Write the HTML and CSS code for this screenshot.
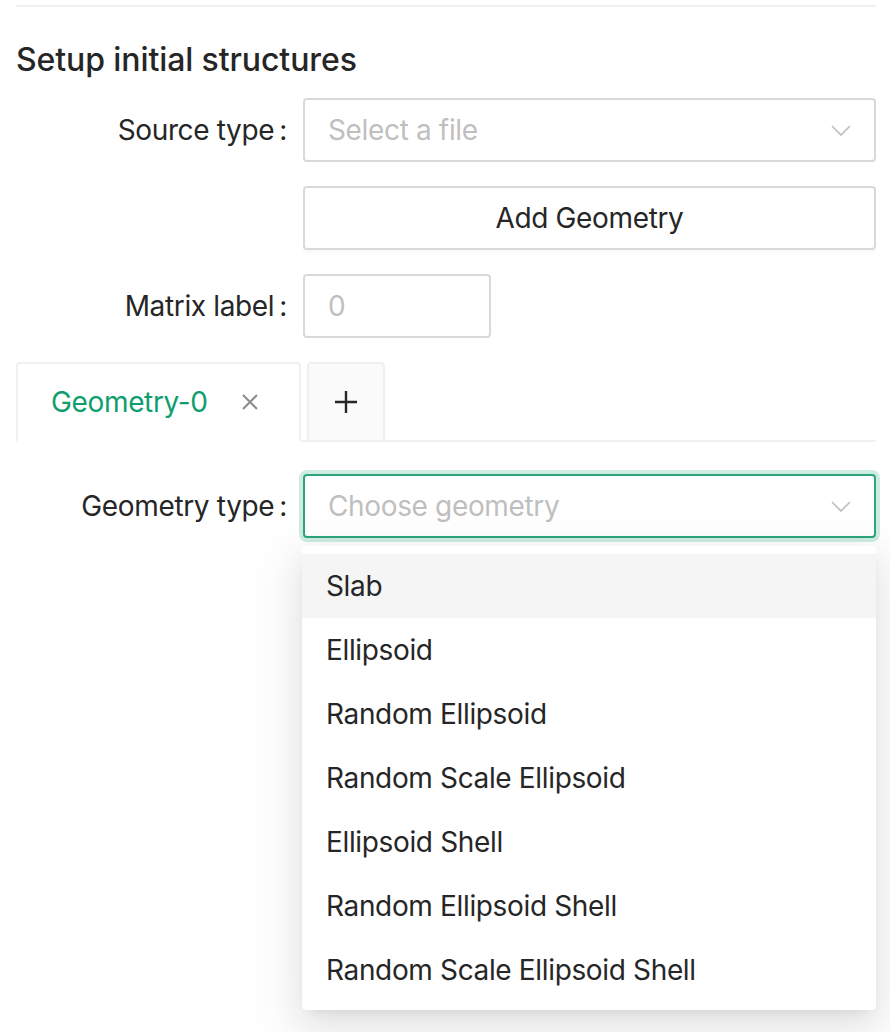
FILE: index.html
```html
<!DOCTYPE html>
<html>
<head>
<meta charset="utf-8">
<link rel="stylesheet" href="styles.css">
</head>
<body>
<div class="page">
  <div class="divider"></div>
  <h2 class="title">Setup initial structures</h2>
  <div class="form">
    <div class="label"><span>Source type</span></div>
    <div class="control">
      <div class="select">
        <span class="placeholder">Select a file</span>
        <svg class="arrow" width="20" height="11" viewBox="0 0 20 11"><path d="M1 1 L10 10 L19 1" fill="none" stroke="#bfbfbf" stroke-width="1.7"/></svg>
      </div>
    </div>
    <div></div>
    <div class="control">
      <button class="btn">Add Geometry</button>
    </div>
    <div class="label"><span>Matrix label</span></div>
    <div class="control">
      <div class="input-number"><span class="placeholder">0</span></div>
    </div>
  </div>

  <div class="tabs">
    <div class="tab active">
      <span class="tab-text">Geometry-0</span>
      <svg class="tab-close" width="18" height="18" viewBox="0 0 18 18"><path d="M2 2 L16 16 M16 2 L2 16" stroke="#8c8c8c" stroke-width="2"/></svg>
    </div>
    <div class="tab add">
      <svg width="22" height="22" viewBox="0 0 22 22"><path d="M11 0 V22 M0 11 H22" stroke="#262626" stroke-width="2.4"/></svg>
    </div>
  </div>

  <div class="form geo">
    <div class="label"><span>Geometry type</span></div>
    <div class="control">
      <div class="select-wrap">
        <div class="select focused">
          <span class="placeholder">Choose geometry</span>
          <svg class="arrow" width="20" height="11" viewBox="0 0 20 11"><path d="M1 1 L10 10 L19 1" fill="none" stroke="#bfbfbf" stroke-width="1.7"/></svg>
        </div>
        <div class="dropdown">
          <div class="option active">Slab</div>
          <div class="option">Ellipsoid</div>
          <div class="option">Random Ellipsoid</div>
          <div class="option">Random Scale Ellipsoid</div>
          <div class="option">Ellipsoid Shell</div>
          <div class="option">Random Ellipsoid Shell</div>
          <div class="option">Random Scale Ellipsoid Shell</div>
        </div>
      </div>
    </div>
  </div>
</div>
</body>
</html>
```
FILE: styles.css
```css
* { box-sizing: border-box; }
html, body { margin: 0; padding: 0; background: #fff; }
body {
  font-family: Inter, "Noto Sans", "Liberation Sans", sans-serif;
  color: #262626;
  font-size: 28px;
  letter-spacing: -0.35px;
}
.page {
  padding: 5px 14px 0 16px;
  height: 1032px;
  overflow: hidden;
}
.divider {
  height: 2px;
  background: #f0f0f0;
}
.title {
  margin: 29px 0 14px;
  font-size: 32px;
  line-height: 48px;
  font-weight: 500;
  letter-spacing: -0.1px;
  color: #262626;
}
.form {
  display: grid;
  grid-template-columns: 271px 1fr;
  column-gap: 16px;
  row-gap: 24px;
}
.label {
  display: flex;
  align-items: center;
  justify-content: flex-end;
  height: 64px;
  line-height: 42px;
  color: #262626;
}
.label span::after {
  content: ":";
  margin-left: 5px;
}
.control {
  display: flex;
  align-items: center;
  min-height: 64px;
}
.select {
  width: 100%;
  height: 64px;
  border: 2px solid #d9d9d9;
  border-radius: 4px;
  display: flex;
  align-items: center;
  justify-content: space-between;
  padding: 0 23px 0 23px;
  background: #fff;
}
.select.focused {
  border-color: #2ea57c;
  box-shadow: 0 0 0 4px rgba(14, 158, 110, 0.2);
}
.placeholder {
  color: #bfbfbf;
  line-height: 42px;
}
.arrow { flex: none; }
.btn {
  width: 100%;
  height: 64px;
  border: 2px solid #d9d9d9;
  border-radius: 4px;
  background: #fff;
  font: inherit;
  letter-spacing: inherit;
  color: #262626;
  box-shadow: 0 4px 0 rgba(0, 0, 0, 0.015);
  padding: 0 30px;
}
.input-number {
  width: 188px;
  height: 64px;
  border: 2px solid #d9d9d9;
  border-radius: 4px;
  display: flex;
  align-items: center;
  padding: 0 23px;
}
.tabs {
  margin-top: 24px;
  display: flex;
  gap: 6px;
  border-bottom: 2px solid #f0f0f0;
  height: 80px;
}
.tab {
  height: 80px;
  border: 2px solid #f0f0f0;
  border-radius: 4px 4px 0 0;
  background: #fafafa;
  display: flex;
  align-items: center;
}
.tab.active {
  width: 285px;
  background: #fff;
  border-bottom-color: #fff;
  padding-left: 33px;
}
.tab-text {
  color: #0e9e6e;
  line-height: 42px;
}
.tab-close { margin-left: 33px; }
.tab.add {
  width: 78px;
  justify-content: center;
}
.geo { margin-top: 32px; }
.select-wrap {
  position: relative;
  width: 100%;
}
.dropdown {
  position: absolute;
  left: -1px;
  right: 0;
  top: 72px;
  background: #fff;
  border-radius: 4px;
  padding: 8px 0;
  box-shadow: 0 6px 12px -8px rgba(0, 0, 0, 0.12), 0 12px 32px 0 rgba(0, 0, 0, 0.08), 0 18px 56px 16px rgba(0, 0, 0, 0.05);
}
.option {
  height: 64px;
  line-height: 64px;
  padding: 0 24px;
  color: #262626;
}
.option.active { background: #f5f5f5; }
```
